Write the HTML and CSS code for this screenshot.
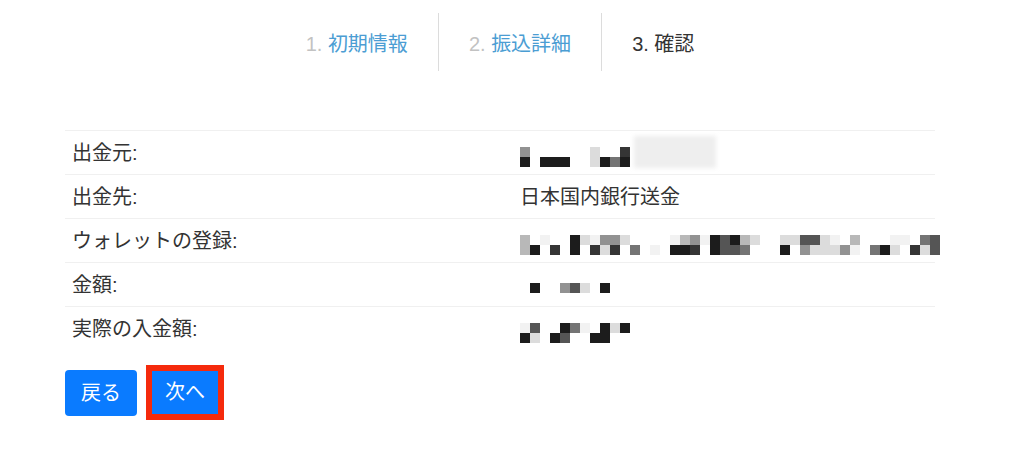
FILE: index.html
```html
<!DOCTYPE html>
<html lang="ja">
<head>
    <meta charset="UTF-8">
    <meta name="viewport" content="width=device-width, initial-scale=1.0">
    <title>確認</title>
    <link rel="stylesheet" href="styles.css">
</head>
<body>
    <div class="container">
        <div class="steps">
            <div class="step done"><span><span class="num">1.</span> <span class="name">初期情報</span></span></div>
            <div class="step done"><span><span class="num">2.</span> <span class="name">振込詳細</span></span></div>
            <div class="step current"><span>3. 確認</span></div>
        </div>

        <div class="info">
            <div class="info-row">
                <div class="label">出金元:</div>
                <div class="value masked">
                    <div class="mosaic">
                        <i class="c4"></i><i class="c8"></i>
                        <i></i><i></i>
                        <i></i><i class="c8"></i>
                        <i></i><i class="c8"></i>
                        <i></i><i class="c8"></i>
                        <i></i><i></i>
                        <i></i><i></i>
                        <i class="c2"></i><i class="c2"></i>
                        <i></i><i class="c8"></i>
                        <i></i><i class="c5"></i>
                        <i class="c7"></i><i class="c8"></i>
                    </div>
                    <div class="smudge"></div>
                </div>
            </div>
            <div class="info-row">
                <div class="label">出金先:</div>
                <div class="value">日本国内銀行送金</div>
            </div>
            <div class="info-row">
                <div class="label">ウォレットの登録:</div>
                <div class="value masked">
                    <div class="mosaic">
                        <i class="c3"></i><i class="c3"></i>
                        <i></i><i class="c8"></i>
                        <i class="c1"></i><i></i>
                        <i></i><i class="c7"></i>
                        <i></i><i></i>
                        <i class="c8"></i><i class="c8"></i>
                        <i class="c2"></i><i></i>
                        <i class="c1"></i><i class="c7"></i>
                        <i class="c4"></i><i class="c2"></i>
                        <i class="c4"></i><i class="c7"></i>
                        <i class="c2"></i><i></i>
                        <i></i><i class="c5"></i>
                        <i></i><i></i>
                        <i></i><i class="c1"></i>
                        <i></i><i></i>
                        <i class="c1"></i><i class="c8"></i>
                        <i class="c3"></i><i class="c8"></i>
                        <i class="c4"></i><i class="c7"></i>
                        <i class="c1"></i><i></i>
                        <i class="c8"></i><i class="c8"></i>
                        <i class="c6"></i><i class="c6"></i>
                        <i class="c8"></i><i class="c6"></i>
                        <i class="c3"></i><i class="c5"></i>
                        <i class="c2"></i><i></i>
                        <i></i><i></i>
                        <i></i><i></i>
                        <i class="c2"></i><i class="c8"></i>
                        <i class="c2"></i><i></i>
                        <i class="c6"></i><i class="c4"></i>
                        <i class="c6"></i><i class="c2"></i>
                        <i class="c2"></i><i class="c2"></i>
                        <i class="c1"></i><i class="c2"></i>
                        <i></i><i class="c4"></i>
                        <i class="c3"></i><i class="c1"></i>
                        <i></i><i></i>
                        <i></i><i class="c5"></i>
                        <i></i><i class="c8"></i>
                        <i class="c1"></i><i class="c2"></i>
                        <i class="c1"></i><i></i>
                        <i></i><i class="c7"></i>
                        <i class="c5"></i><i class="c2"></i>
                        <i class="c6"></i><i class="c6"></i>
                    </div>
                </div>
            </div>
            <div class="info-row">
                <div class="label">金額:</div>
                <div class="value masked">
                    <div class="mosaic single">
                        <i></i>
                        <i class="c8"></i>
                        <i></i>
                        <i></i>
                        <i class="c4"></i>
                        <i class="c6"></i>
                        <i class="c2"></i>
                        <i></i>
                        <i class="c8"></i>
                    </div>
                </div>
            </div>
            <div class="info-row">
                <div class="label">実際の入金額:</div>
                <div class="value masked">
                    <div class="mosaic">
                        <i class="c1"></i><i class="c8"></i>
                        <i class="c6"></i><i class="c2"></i>
                        <i></i><i></i>
                        <i></i><i class="c8"></i>
                        <i class="c8"></i><i class="c6"></i>
                        <i class="c5"></i><i></i>
                        <i class="c1"></i><i></i>
                        <i></i><i class="c8"></i>
                        <i class="c8"></i><i class="c8"></i>
                        <i class="c2"></i><i></i>
                        <i class="c8"></i><i></i>
                    </div>
                </div>
            </div>
        </div>

        <div class="actions">
            <button class="btn">戻る</button>
            <button class="btn btn-marked">次へ</button>
        </div>
    </div>
</body>
</html>
```

FILE: styles.css
```css
body {
    font-family: "Liberation Sans", "Noto Sans CJK JP", sans-serif;
    margin: 0;
    background-color: #fff;
    color: #333;
}
.container {
    width: 870px;
    margin-left: 65px;
    padding-top: 13px;
}
.steps {
    display: flex;
    justify-content: center;
}
.step {
    display: flex;
    align-items: center;
    height: 58px;
    padding: 0 30px;
    font-size: 20px;
}
.step + .step {
    border-left: 1px solid #dcdcdc;
}
.step .num {
    color: #c2c2c2;
}
.step .name {
    color: #4b9dd3;
}
.step.current {
    color: #333;
}
.info {
    margin-top: 59px;
}
.info-row {
    display: grid;
    grid-template-columns: 450px 1fr;
    height: 44px;
    box-sizing: border-box;
    border-top: 1px solid #f0f0f0;
    font-size: 20px;
    line-height: 1.2;
}
.label {
    align-self: center;
    padding-left: 7px;
}
.value {
    align-self: center;
    padding-left: 5px;
}
.value.masked {
    align-self: stretch;
    display: flex;
    align-items: flex-start;
}
.mosaic {
    display: grid;
    grid-template-rows: 10px 10px;
    grid-auto-flow: column;
    grid-auto-columns: 10px;
    margin-top: 16px;
    filter: blur(0.5px);
}
.mosaic.single {
    grid-template-rows: 10px;
    margin-top: 20px;
}
.mosaic i {
    display: block;
}
.c1 { background-color: #f2f2f2; }
.c2 { background-color: #dcdcdc; }
.c3 { background-color: #b8b8b8; }
.c4 { background-color: #929292; }
.c5 { background-color: #747474; }
.c6 { background-color: #555; }
.c7 { background-color: #353535; }
.c8 { background-color: #1c1c1c; }
.smudge {
    width: 82px;
    height: 32px;
    margin: 5px 0 0 4px;
    background-color: #eeeeee;
    filter: blur(2px);
}
.actions {
    display: flex;
    align-items: center;
    gap: 9px;
    margin-top: 15px;
}
.btn {
    font-family: "Liberation Sans", "Noto Sans CJK JP", sans-serif;
    font-size: 20px;
    line-height: 30px;
    padding: 8px 16px;
    background-color: #0a7bff;
    color: #fff;
    border: none;
    border-radius: 4px;
    cursor: pointer;
}
.btn-marked {
    line-height: 31px;
    padding: 6px 13px;
    border: 6px solid #f52a0c;
    border-radius: 0;
}
```
